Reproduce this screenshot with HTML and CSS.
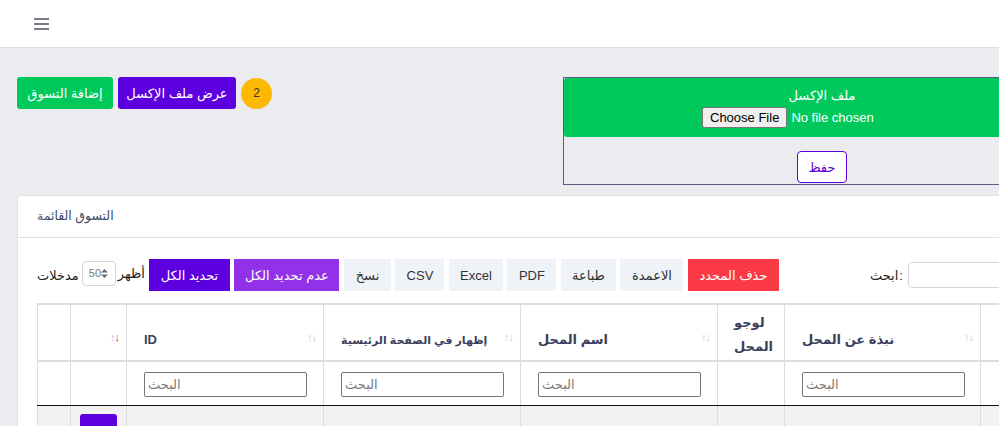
FILE: index.html
```html
<!DOCTYPE html>
<html lang="ar">
<head>
<meta charset="utf-8">
<title>التسوق</title>
<link rel="stylesheet" href="styles.css">
</head>
<body>
<header class="topbar">
  <svg class="burger" width="15" height="12" viewBox="0 0 15 12"><rect x="0" y="0" width="15" height="2" fill="#7c7a88"/><rect x="0" y="5" width="15" height="2" fill="#7c7a88"/><rect x="0" y="10" width="15" height="2" fill="#7c7a88"/></svg>
</header>
<main class="page">
  <div class="top-row">
    <div class="actions">
      <button class="btn btn-green">إضافة التسوق</button>
      <button class="btn btn-purple">عرض ملف الإكسل</button>
      <span class="badge">2</span>
    </div>
    <form class="excel-box">
      <div class="excel-head">
        <div class="excel-label">ملف الإكسل</div>
        <input type="file" class="file-input">
      </div>
      <div class="excel-foot">
        <button type="button" class="btn-save">حفظ</button>
      </div>
    </form>
  </div>

  <section class="card">
    <div class="card-head">التسوق القائمة</div>
    <div class="card-body">
      <div class="toolbar">
        <span class="lbl">مدخلات</span>
        <span class="select">50<svg class="arrows" width="7" height="9" viewBox="0 0 7 9"><path d="M3.5 0 L7 3.6 H0 Z M3.5 9 L0 5.4 H7 Z" fill="#6f6f6f"/></svg></span>
        <span class="lbl lbl-show">أظهر</span>
        <div class="btn-group">
          <button class="tb tb-dark">تحديد الكل</button>
          <button class="tb tb-violet">عدم تحديد الكل</button>
          <button class="tb w47">نسخ</button>
          <button class="tb w49">CSV</button>
          <button class="tb w54">Excel</button>
          <button class="tb w49">PDF</button>
          <button class="tb w55">طباعة</button>
          <button class="tb w63">الاعمدة</button>
          <button class="tb tb-red">حذف المحدد</button>
        </div>
        <label class="search"><span>ابحث</span><span class="colon">:</span><input type="text" class="search-input"></label>
      </div>

      <table class="grid">
        <colgroup>
          <col class="c1"><col class="c2"><col class="c3"><col class="c3"><col class="c3"><col class="c6"><col class="c7"><col>
        </colgroup>
        <thead>
          <tr class="head-row">
            <th></th>
            <th><span class="sort"><i class="up">↑</i><i class="down active">↓</i></span></th>
            <th>ID<span class="sort"><i>↑</i><i>↓</i></span></th>
            <th class="long">إظهار في الصفحة الرئيسية<span class="sort"><i>↑</i><i>↓</i></span></th>
            <th>اسم المحل<span class="sort"><i>↑</i><i>↓</i></span></th>
            <th class="logo-col">لوجو<br>المحل</th>
            <th>نبذة عن المحل<span class="sort"><i>↑</i><i>↓</i></span></th>
            <th></th>
          </tr>
          <tr class="filter-row">
            <td></td>
            <td></td>
            <td><input class="filter" type="text" placeholder="البحث"></td>
            <td><input class="filter" type="text" placeholder="البحث"></td>
            <td><input class="filter" type="text" placeholder="البحث"></td>
            <td></td>
            <td><input class="filter" type="text" placeholder="البحث"></td>
            <td></td>
          </tr>
        </thead>
        <tbody>
          <tr class="data-row">
            <td></td>
            <td><button class="btn-view">عرض</button></td>
            <td></td><td></td><td></td><td></td><td></td><td></td>
          </tr>
        </tbody>
      </table>
    </div>
  </section>
</main>
</body>
</html>
```

FILE: styles.css
```css
html, body {
  margin: 0;
  width: 999px;
  height: 426px;
  overflow: hidden;
}
body {
  background: #ebecef;
  font-family: "Liberation Sans", "DejaVu Sans", sans-serif;
  font-size: 13px;
  color: #333;
}
.topbar {
  height: 47px;
  background: #fff;
  border-bottom: 1px solid #dcdde1;
  display: flex;
  align-items: center;
  padding-left: 34px;
}
.burger { display: block; }

.page {
  width: 1064px;
  padding: 29px 17px 0;
}
.top-row {
  display: flex;
  align-items: flex-start;
  justify-content: space-between;
}
.actions {
  display: flex;
  align-items: center;
  gap: 5px;
}
.btn {
  height: 32px;
  border: 0;
  border-radius: 3px;
  color: #fff;
  font: inherit;
  font-size: 13px;
  padding: 0;
  white-space: nowrap;
}
.btn-green { background: #00c95c; width: 96px; }
.btn-purple { background: #5c00e0; width: 118px; }
.badge {
  width: 31px;
  height: 31px;
  border-radius: 50%;
  background: #ffb800;
  color: #333;
  display: flex;
  align-items: center;
  justify-content: center;
  font-size: 12px;
}

.excel-box {
  width: 516px;
  height: 106px;
  border: 1px solid #5d5a86;
  margin: 0;
}
.excel-head {
  height: 59px;
  background: #00c95c;
  border-radius: 3px;
  text-align: center;
  padding-top: 8px;
  box-sizing: border-box;
}
.excel-label {
  color: #fff;
  line-height: 20px;
  font-size: 13px;
}
.file-input {
  width: 240px;
  font-family: "Liberation Sans", sans-serif;
  font-size: 13px;
  color: #fff;
  margin-top: 1px;
}
.excel-foot {
  text-align: center;
  padding-top: 14px;
}
.btn-save {
  width: 50px;
  height: 32px;
  background: #fff;
  border: 1px solid #5c00e0;
  border-radius: 4px;
  color: #5c00e0;
  font: inherit;
  padding: 0;
}

.card {
  margin-top: 10px;
  background: #fff;
  border: 1px solid #dee0e4;
  border-radius: 4px;
}
.card-head {
  height: 41px;
  line-height: 41px;
  padding: 0 19px;
  border-bottom: 1px solid #dee0e4;
  color: #3c4966;
  font-size: 12.5px;
}
.card-body {
  padding: 21px 19px 0;
}
.toolbar {
  display: flex;
  align-items: center;
  height: 32px;
}
.lbl { color: #222; font-size: 13px; }
.select {
  width: 34px;
  height: 25px;
  box-sizing: border-box;
  margin: -4px 2px 0 3px;
  border: 1px solid #d5d7dc;
  border-radius: 4px;
  display: flex;
  align-items: center;
  padding-left: 6px;
  color: #777;
  font-size: 11px;
}
.arrows { display: block; }
.lbl-show { margin-right: 4px; margin-top: -4px; }
.btn-group {
  display: flex;
  gap: 4.5px;
}
.tb {
  height: 32px;
  border: 0;
  border-radius: 0;
  background: #eff2f6;
  color: #333;
  font: inherit;
  font-size: 13px;
  padding: 0;
  white-space: nowrap;
}
.w47 { width: 47px; }
.w49 { width: 49px; }
.w54 { width: 54px; }
.w55 { width: 55px; }
.w63 { width: 63px; }
.tb-dark { background: #5c00e0; color: #fff; width: 81px; }
.tb-violet { background: #9132e8; color: #fff; width: 105px; }
.tb-red { background: #fc3a46; color: #fff; width: 91px; }
.search {
  margin-left: 91px;
  display: flex;
  align-items: center;
  color: #222;
}
.colon { margin-left: 1px; }
.search-input {
  margin-left: 5px;
  width: 150px;
  height: 26px;
  box-sizing: border-box;
  border: 1px solid #d5d7dc;
  border-radius: 4px;
}

.grid {
  margin-top: 12px;
  border-collapse: collapse;
  width: 1026px;
  table-layout: fixed;
}
.c1 { width: 33px; }
.c2 { width: 56px; }
.c3 { width: 197px; }
.c6 { width: 67px; }
.c7 { width: 196px; }
.grid th, .grid td {
  border-left: 1px solid #dcdde2;
  border-right: 1px solid #dcdde2;
}
.head-row th {
  height: 44px;
  border-top: 2px solid #dcdde2;
  border-bottom: 2px solid #dcdde2;
  vertical-align: bottom;
  text-align: left;
  padding: 0 8px 11px 17px;
  color: #3b3f5c;
  font-size: 13px;
  font-weight: bold;
  position: relative;
  line-height: 18px;
  white-space: nowrap;
}
.head-row th.long { font-size: 11px; }
.head-row th.logo-col {
  padding: 6px 0 0 16px;
  line-height: 24px;
  vertical-align: top;
}
.sort {
  position: absolute;
  right: 7px;
  bottom: 14px;
  font-size: 11px;
  letter-spacing: -1px;
  color: #c8cbd6;
  font-weight: normal;
}
.sort i { font-style: normal; }
.sort .up { color: #aeb8ec; }
.sort .active { color: #d9455a; }
.filter-row td {
  height: 43px;
  padding: 0 17px;
  border-bottom: 1px solid #111;
}
.filter {
  width: 163px;
  height: 25px;
  box-sizing: border-box;
  border: 1px solid #767676;
  border-radius: 2px;
  font-family: "Liberation Sans", "DejaVu Sans", sans-serif;
  font-size: 13px;
  padding: 0 3px;
  margin-top: 1px;
  display: block;
}
.filter::placeholder { color: #7a7a7a; }
.data-row td {
  background: #f2f2f2;
  height: 40px;
  vertical-align: top;
  padding: 8px 9px;
}
.btn-view {
  background: #5c00e0;
  color: #fff;
  border: 0;
  border-radius: 3px;
  height: 28px;
  width: 37px;
  font: inherit;
  font-size: 12px;
  padding: 0;
}
```
